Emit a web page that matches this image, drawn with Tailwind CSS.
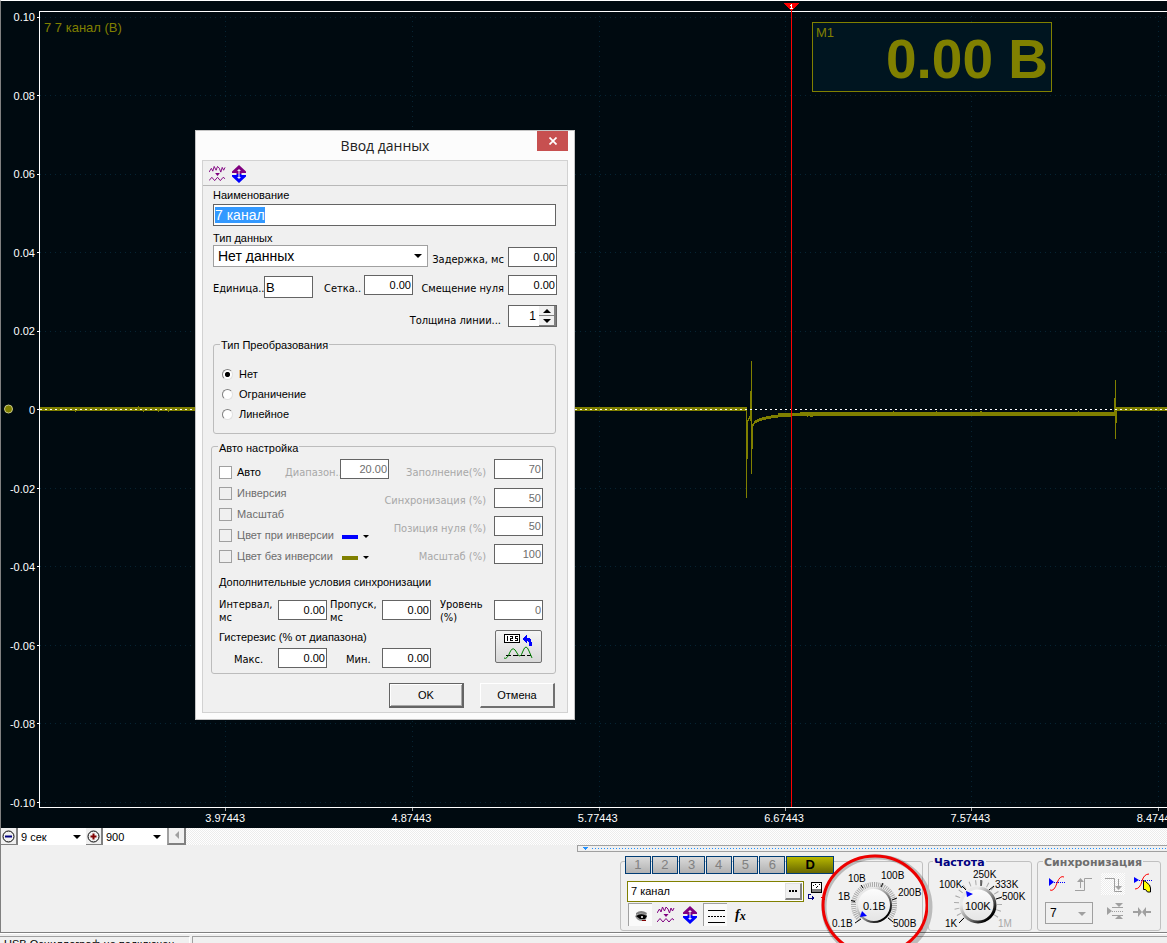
<!DOCTYPE html>
<html lang="ru">
<head>
<meta charset="utf-8">
<title>Осциллограф</title>
<script src="https://cdn.jsdelivr.net/npm/@tailwindcss/browser@4"></script>
</head>
<body class="bg-[#f0f0f0] text-black">
<svg class="absolute h-0 w-0" aria-hidden="true">
  <defs>
    <symbol id="waves" viewBox="0 0 18 18">
      <g fill="none" stroke="#800080">
        <path d="M0 7 L2.500 3 L4 6 L5.500 1 L7.500 5 L9 1 L11 3 L12.500 7 L14 2 L15.500 5 L17 2"/>
        <path d="M0 16 L3 12.500 L6 16 L9 12.500 L12 16 L15 12.500 L17 14"/>
      </g>
      <path d="M6.500 8 H11.500 L9 11 Z" fill="#800080"/>
    </symbol>
    <symbol id="updown" viewBox="0 0 16 18">
      <path d="M8 0 L15 6.500 V8 H10.500 V9 H5.500 V8 H1 V6.500 Z" fill="#800080"/>
      <path d="M8 18 L15 11.500 V10 H10.500 V9 H5.500 V10 H1 V11.500 Z" fill="#0000ff"/>
      <path d="M8 4 V14 M6.500 5.500 H9.500 M6.500 12.500 H9.500" stroke="#f0f0f0"/>
    </symbol>
    <symbol id="caret" viewBox="0 0 8 4"><path d="M0 0 H8 L4 4 Z" fill="currentColor"/></symbol>
    <pattern id="hatch" width="2" height="2" patternUnits="userSpaceOnUse"><rect width="2" height="2" fill="#fff"/><rect width="1" height="1" fill="#ececec"/><rect x="1" y="1" width="1" height="1" fill="#ececec"/></pattern>
    <linearGradient id="knobRim" x1="0" y1="0" x2="1" y2="1"><stop offset="0.25" stop-color="#e8e8e8"/><stop offset="0.6" stop-color="#777"/><stop offset="0.85" stop-color="#000"/></linearGradient>
    <linearGradient id="knobFace" x1="0" y1="0" x2="0" y2="1"><stop offset="0" stop-color="#fdfdfd"/><stop offset="1" stop-color="#e4e4e4"/></linearGradient>
  </defs>
</svg>

<div class="flex h-screen min-h-[720px] flex-col overflow-hidden font-['Liberation_Sans',sans-serif]">
  <main class="relative flex min-h-0 flex-1 border-t border-l border-t-white border-l-[#808080] bg-[#000a10]">
    <svg class="absolute inset-0 h-full w-full" viewBox="1 1 1166 827" preserveAspectRatio="none" shape-rendering="crispEdges" aria-hidden="true">
      <g stroke="#062433" stroke-dasharray="1 4" fill="none">
        <path d="M40 17.500H1167M40 95.500H1167M40 174.500H1167M40 252.500H1167M40 331.500H1167M40 488.500H1167M40 566.500H1167M40 645.500H1167M40 723.500H1167M40 802.500H1167"/>
        <path d="M225.500 16V807M412.500 16V807M599.500 16V807M785.500 16V807M971.500 16V807M1158.500 16V807"/>
      </g>
      <path d="M1167 11.500H39.500V807.500H1167" stroke="#fff" fill="none"/>
      <path d="M37 17.500h2M37 95.500h2M37 174.500h2M37 252.500h2M37 331.500h2M37 409.500h2M37 488.500h2M37 566.500h2M37 645.500h2M37 723.500h2M37 802.500h2" stroke="#fff"/>
      <path d="M225.500 808v3M412.500 808v3M599.500 808v3M785.500 808v3M971.500 808v3M1158.500 808v3" stroke="#aaa"/>
      <g fill="#808000">
        <path d="M40 407H747V411H40ZM746 407h1v91h-1zM747 421h1v38h-1zM747 420h1v-2h1v-2h2v3h-2v2h-2zM750 391h1v30h-1zM751 361h1v113h-1zM752 425h1v24h-1z"/>
        <path d="M752 424h1v3h-1zM753 423h1v3h-1zM754 421h1v3h-1zM755 420h2v3h-2zM757 419h2v3h-2zM759 418h3v3h-3zM762 417h4v3h-4zM766 416h5v3h-5zM771 415h7v3h-7zM778 413h14v4h-14zM792 413h14v3h-14zM800 412h316v4H800zM1115 380h1v59h-1zM1114 398h1v14h-1zM1116 407h1v16h-1zM1116 407H1167V411H1116Z"/>
        <path d="M75 411h1v1h-1zM138 406h1v1h-1zM143 411h1v1h-1zM158 411h1v1h-1zM168 411h1v1h-1zM807 416h1v1h-1zM810 416h3v1h-3zM893 411h1v1h-1zM936 411h1v1h-1zM980 411h2v1h-2zM1078 411h1v1h-1z"/>
      </g>
      <path d="M40 409.500H1167" stroke="#fff" stroke-dasharray="2 3"/>
      <path d="M791.500 8V807" stroke="#ff0000"/>
      <path d="M784 3H799L793 10H790Z" fill="#ff0000"/>
      <path d="M790 5.500h2M791.500 4v5M790 8.500h3" stroke="#fff"/>
      <circle cx="8.500" cy="409" r="4" fill="#808000" stroke="#c8c888" shape-rendering="auto"/>
    </svg>
    <div class="relative flex w-[34px] flex-col justify-between pt-2 pb-[17px] text-right text-[11px] leading-4 text-white">
      <span>0.10</span><span>0.08</span><span>0.06</span><span>0.04</span><span>0.02</span><span>0</span><span>-0.02</span><span>-0.04</span><span>-0.06</span><span>-0.08</span><span>-0.10</span>
    </div>
    <div class="relative flex min-w-0 flex-1 flex-col justify-between overflow-hidden">
      <p class="pt-[19px] pl-[9px] text-[13px] leading-4 text-[#808000]">7 7 канал (B)</p>
      <div class="flex pb-[2px] pl-[97px] text-center text-[11px] leading-4 text-white">
        <span class="w-[18%] shrink-0">3.97443</span><span class="w-[18%] shrink-0">4.87443</span><span class="w-[18%] shrink-0">5.77443</span><span class="w-[18%] shrink-0">6.67443</span><span class="w-[18%] shrink-0">7.57443</span><span class="w-[18%] shrink-0">8.47443</span>
      </div>
    </div>
    <div class="absolute top-[21px] left-[811px] flex h-[70px] w-[240px] justify-between border border-[#808000] bg-[#001520] px-[3px] text-[#808000]">
      <span class="pt-[2px] text-[13px] leading-4">M1</span>
      <span class="pt-[4px] text-[55px] leading-[64px] font-bold">0.00 B</span>
    </div>
  </main>

  <div class="flex h-[17px] shrink-0 border-l border-[#808080] bg-[#f0f0f0] text-[11px]">
    <button aria-label="Уменьшить" class="flex h-[17px] w-[17px] items-center justify-center border-r-2 border-b border-[#808080] bg-[#f0f0f0]">
      <svg width="13" height="13"><circle cx="6.500" cy="6.500" r="5.500" fill="none" stroke="#000"/><path d="M3 6.500h7" stroke="#000080" stroke-width="2"/></svg></button>
    <div class="relative w-[68px] bg-white">
      <select aria-label="Время" class="block h-[17px] w-full appearance-none pl-[3px] leading-4"><option>9 сек</option></select>
      <svg class="pointer-events-none absolute top-[7px] right-[5px] h-1 w-2"><use href="#caret"/></svg>
    </div>
    <button aria-label="Увеличить" class="flex h-[17px] w-[17px] items-center justify-center border-r-2 border-b border-[#808080] bg-[#f0f0f0]">
      <svg width="13" height="13"><circle cx="6.500" cy="6.500" r="5.500" fill="none" stroke="#000"/><path d="M3.500 6.500h6M6.500 3.500v6" stroke="#800000" stroke-width="2"/></svg></button>
    <div class="relative w-[64px] bg-white">
      <select aria-label="Отсчёты" class="block h-[17px] w-full appearance-none pl-[3px] leading-4"><option>900</option></select>
      <svg class="pointer-events-none absolute top-[7px] right-[6px] h-1 w-2"><use href="#caret"/></svg>
    </div>
    <button aria-label="Назад" class="flex w-[19px] items-center justify-center border-r-2 border-b-2 border-l-2 border-[#808080] border-l-[#a0a0a0] bg-[#f0f0f0]"><svg width="5" height="9"><path d="M5 0v8L1 4Z" fill="#a0a0a0"/></svg></button>
    <svg class="h-[17px] min-w-0 flex-1"><rect width="100%" height="100%" fill="url(#hatch)"/></svg>
  </div>

  <section class="flex h-[88px] shrink-0 border-b border-l border-[#808080]">
    <div class="w-[576px] shrink-0"></div>
    <div class="min-w-0 flex-1">
      <div class="flex h-[7px] items-center border border-r-0 border-[#a0a0a0] pl-[5px]">
        <svg class="h-[3px] w-full" shape-rendering="crispEdges"><path d="M0 0h5L2.500 3Z" fill="#2090ff"/><path d="M9 1.500H2000" stroke="#2090ff" stroke-dasharray="1 2"/></svg>
      </div>
      <div class="flex gap-[5px] pt-1 pl-[43px]">
        <fieldset class="relative flex h-[75px] w-[303px] shrink-0 items-start" aria-label="Каналы">
          <div class="absolute inset-x-0 top-[5px] bottom-0 rounded-[3px] border border-[#c0c0c0]"></div>
          <div class="relative w-[214px] pl-[5px]">
            <div class="flex gap-px text-[13px]">
              <button class="h-[18px] w-[26px] border border-[#003c74] bg-linear-to-b from-[#dadada] to-[#b2b2b2] leading-4 text-[#808080]">1</button>
              <button class="h-[18px] w-[26px] border border-[#003c74] bg-linear-to-b from-[#dadada] to-[#b2b2b2] leading-4 text-[#808080]">2</button>
              <button class="h-[18px] w-[26px] border border-[#003c74] bg-linear-to-b from-[#dadada] to-[#b2b2b2] leading-4 text-[#808080]">3</button>
              <button class="h-[18px] w-[26px] border border-[#003c74] bg-linear-to-b from-[#dadada] to-[#b2b2b2] leading-4 text-[#808080]">4</button>
              <button class="h-[18px] w-[26px] border border-[#003c74] bg-linear-to-b from-[#dadada] to-[#b2b2b2] leading-4 text-[#808080]">5</button>
              <button class="h-[18px] w-[26px] border border-[#003c74] bg-linear-to-b from-[#dadada] to-[#b2b2b2] leading-4 text-[#808080]">6</button>
              <button class="h-[18px] w-[48px] border border-[#003c74] bg-linear-to-b from-[#b8b800] to-[#686800] leading-4 font-bold text-black">D</button>
            </div>
            <div class="mt-[7px] flex gap-1 pl-[2px]">
              <div class="flex h-[21px] w-[177px] border border-[#808000] bg-white p-px">
                <input aria-label="Имя канала" value="7 канал" class="w-0 min-w-0 flex-1 pl-[2px] text-[11px] outline-none">
                <button aria-label="Выбрать канал" class="flex w-[17px] items-center justify-center border border-r-2 border-b-2 border-[#e0e0e0] border-r-[#808080] border-b-[#808080] bg-[#f0f0f0]"><svg width="9" height="2"><path d="M0 0h2v2H0zM3 0h2v2H3zM6 0h2v2H6z"/></svg></button>
              </div>
              <button aria-label="Измеритель" class="h-[20px] w-[18px]"><svg width="18" height="20" shape-rendering="crispEdges"><path d="M3.500 1.500h10v10h-10z" fill="#fff" stroke="#000"/><path d="M4 8h9v3H4z" fill="#808080"/><path d="M5 4h1v1H5zM7 3h1v1H7zM9 5h1v1H9zM11 3h1v1h-1zM8 6h1v1H8z"/><path d="M3 13.500H.5v3.500H5M4.500 15v4M5.500 16v2" fill="none" stroke="#000080"/><path d="M17 14v5L13 16.500Z" fill="#e00000"/></svg></button>
            </div>
            <div class="mt-px flex items-center pl-[3px]">
              <button aria-label="Показать" class="h-[23px] w-[24px] border-t border-l border-[#a0a0a0] bg-[#fafafa]"><svg width="23" height="22"><path d="M7 9Q12 5 18 9L17 11Q12 8 7 11Z" fill="#808080"/><path d="M6 12Q12 7 18 11Q18 17 13 17Q8 17 6 12Z" fill="#909090"/><path d="M7 12Q12 8.500 18 12L16 15H11Z" fill="#000"/><circle cx="13" cy="13" r="1" fill="#fff"/><path d="M13 16h4v1h-4z" fill="#800000"/></svg></button>
              <button aria-label="Сигналы" class="ml-[5px] h-[18px] w-[18px]"><svg class="h-[18px] w-[18px]"><use href="#waves"/></svg></button>
              <button aria-label="Вверх-вниз" class="ml-[7px] h-[18px] w-[16px]"><svg class="h-[18px] w-[16px]"><use href="#updown"/></svg></button>
              <button aria-label="Линии" class="ml-[5px] h-[23px] w-[24px] border-t border-l border-[#a0a0a0] bg-[#fafafa]"><svg width="23" height="22" shape-rendering="crispEdges"><path d="M4 6.500h17M4 18.500h17" stroke="#000"/><path d="M4 12.500h17" stroke="#000" stroke-dasharray="2 1"/></svg></button>
              <button aria-label="Функция" class="ml-[8px] flex h-[23px] w-[16px] items-center text-[14px] leading-4 font-bold italic font-['Liberation_Serif',serif]">f<span class="pt-[3px] text-[12px]">x</span></button>
            </div>
          </div>
          <svg class="relative h-[75px] w-[88px] overflow-visible font-['Liberation_Sans',sans-serif] text-[10px]" viewBox="834 856 88 75" role="img" aria-label="Диапазон 0.1B">
            <ellipse cx="877" cy="907" rx="53" ry="50" fill="none" stroke="#000" stroke-opacity="0.220" stroke-width="5"/>
            <path d="M859.500 919.500A20.500 20.500 0 1 1 888.500 919.500" fill="none" stroke="#a8a8a8" stroke-width="5" stroke-dasharray="1 1"/>
            <path d="M861 919l-6 4M855 901.500l-4-1M863 888l-2-3M881 887l2-4M892 900l5-2M888 918l5 4" stroke="#000"/>
            <circle cx="874" cy="905" r="17" fill="url(#knobFace)" stroke="url(#knobRim)" stroke-width="2"/>
            <path d="M862 911l5 5-7 1Z" fill="#0000ff"/>
            <text x="863" y="910" font-size="11">0.1B</text>
            <text x="832" y="927">0.1B</text><text x="838" y="900">1B</text><text x="848" y="882">10B</text><text x="881" y="879">100B</text><text x="898" y="896">200B</text><text x="893" y="927">500B</text>
            <ellipse cx="875" cy="905" rx="52" ry="49" fill="none" stroke="#ee0000" stroke-width="3"/>
          </svg>
        </fieldset>
        <fieldset class="relative h-[75px] w-[104px] shrink-0">
          <div class="absolute inset-x-0 top-[5px] bottom-0 rounded-[3px] border border-[#c0c0c0]"></div>
          <legend class="absolute top-0 left-[5px] bg-[#f0f0f0] px-px font-['DejaVu_Sans',sans-serif] text-[11px] leading-[14px] font-bold text-[#000080]">Частота</legend>
          <svg class="relative h-[75px] w-[104px] overflow-visible font-['Liberation_Sans',sans-serif] text-[10px]" viewBox="928 856 104 75" role="img" aria-label="Частота 100K">
            <path d="M963 919.500A21.500 21.500 0 1 1 993 919.500" fill="none" stroke="#a8a8a8" stroke-width="5" stroke-dasharray="1 5"/>
            <path d="M964 918l-5 5M966 890l-4-4M981 886v-6M989 890l5-4M996 899l6-2" stroke="#000"/>
            <circle cx="978" cy="905" r="17" fill="url(#knobFace)" stroke="url(#knobRim)" stroke-width="3"/>
            <path d="M966 891l7 3-6 3Z" fill="#0000ff"/>
            <text x="965" y="910" font-size="11">100K</text>
            <text x="945" y="927">1K</text><text x="939" y="888">100K</text><text x="973" y="878">250K</text><text x="995" y="888">333K</text><text x="1002" y="900">500K</text><text x="998" y="927" fill="#a8a8a8">1M</text>
          </svg>
        </fieldset>
        <fieldset class="relative h-[75px] w-[124px] shrink-0">
          <div class="absolute inset-x-0 top-[5px] bottom-0 rounded-[3px] border border-[#c0c0c0]"></div>
          <legend class="absolute top-0 left-[6px] bg-[#f0f0f0] px-px font-['DejaVu_Sans',sans-serif] text-[11px] leading-[14px] font-bold text-[#6d6d6d]">Синхронизация</legend>
          <div class="relative flex justify-between pt-[17px] pr-[8px] pl-[11px]">
            <button aria-label="Авто"><svg width="18" height="22"><path d="M1 5v8l5-4Z" fill="#0000ff"/><path d="M6 9.500h12" stroke="#0000ff" stroke-dasharray="1 1"/><path d="M2 17Q6 19 9 10Q12 2 16 4" fill="none" stroke="#f00" stroke-width="1"/></svg></button>
            <button aria-label="Фронт"><svg width="20" height="22" fill="none" stroke="#a0a0a0"><path d="M1 17.500h9.500v-12H18M6.500 15V7" stroke-width="1"/><path d="M3 9h7L6.500 5Z" fill="#a0a0a0" stroke="none"/></svg></button>
            <button aria-label="Спад" class="bg-white"><svg width="24" height="22" fill="none" stroke="#a0a0a0"><rect width="24" height="22" fill="url(#hatch)" stroke="none"/><path d="M4 5.500h9.500v13H21M17.500 6v8"/><path d="M14 13h7l-3.500 4Z" fill="#a0a0a0" stroke="none"/></svg></button>
            <button aria-label="Вручную"><svg width="20" height="22"><path d="M1 4v6l5-3Z" fill="#0000ff"/><path d="M6 7.500h13" stroke="#0000ff" stroke-dasharray="1 1"/><path d="M2 16Q7 16 9 8Q11 1 16 1" fill="none" stroke="#f00"/><path d="M10.500 7.500v9l2 0 2 2.500h3v-4l-1-3-4-3.500Z" fill="#ffff00" stroke="#000"/></svg></button>
          </div>
          <div class="relative flex items-start pt-[7px] pl-[8px]">
            <div class="relative h-[22px] w-[48px] border border-[#a0a0a0]">
              <select aria-label="Канал синхронизации" class="block h-full w-full appearance-none pl-1 text-[12px]"><option>7</option></select>
              <svg class="pointer-events-none absolute top-[9px] right-[6px] h-1 w-2 text-[#a0a0a0]"><use href="#caret"/></svg>
            </div>
            <svg class="ml-[13px]" width="18" height="18"><path d="M1 5v8l5-4ZM9 1h8l-4 4ZM9 17h8l-4-4Z" fill="#a0a0a0"/><path d="M6 5.500h11M6 13.500h11" stroke="#a0a0a0"/><path d="M6 9.500h11" stroke="#a0a0a0" stroke-dasharray="1 1"/></svg>
            <svg class="ml-[9px]" width="18" height="18"><path d="M0 9h5V5l4 5-4 5v-4H0ZM18 9h-5V5L9 10l4 5v-4h5Z" fill="#a0a0a0"/></svg>
          </div>
        </fieldset>
      </div>
    </div>
  </section>

  <footer class="flex h-[10px] shrink-0 gap-[2px] overflow-hidden border-t border-white pt-[2px]">
    <div class="w-[190px] shrink-0 overflow-hidden border-t border-r border-[#a0a0a0] border-r-white pt-px pl-1 text-[11px] leading-3 whitespace-nowrap">USB Осциллограф не подключен</div>
    <div class="flex-1 border-t border-l border-[#a0a0a0]"></div>
  </footer>
</div>

<form role="dialog" aria-labelledby="title" class="absolute top-[130px] left-[195px] w-[380px] border border-[#c4c4c4] bg-[#fcfcfc] px-[6px] pb-[6px] font-['Liberation_Sans',sans-serif] text-[11px] leading-[14px]">
  <header class="relative flex h-[29px] items-center justify-center">
    <h1 id="title" class="font-['Open_Sans',sans-serif] text-[14px] text-[#222]">Ввод данных</h1>
    <button type="button" aria-label="Закрыть" class="absolute top-0 right-0 flex h-5 w-[31px] items-center justify-center bg-[#c75050]"><svg width="8" height="8"><path d="M.5 .5l7 7M7.500 .5l-7 7" stroke="#fff" stroke-width="1.700"/></svg></button>
  </header>
  <div class="border border-[#d2d2d2] bg-[#f0f0f0] pb-[4px]">
    <div class="flex h-[25px] items-center gap-[5px] border-b border-[#b8b8b8] pt-px pl-[6px]">
      <button type="button" aria-label="Сигналы" class="h-[18px] w-[17px]"><svg class="h-[18px] w-[17px]"><use href="#waves"/></svg></button>
      <button type="button" aria-label="Вверх-вниз" class="h-[18px] w-[16px]"><svg class="h-[18px] w-[16px]"><use href="#updown"/></svg></button>
    </div>
    <div class="pt-[2px] pr-[11px] pl-[10px]">
      <label for="name" class="block">Наименование</label>
      <input id="name" value="7 канал" autofocus class="mt-[2px] block h-[22px] w-full border border-[#646464] bg-white px-px text-[14px] leading-4 outline-none selection:bg-[#3399ff] selection:text-white">
    </div>
    <div class="pt-[5px] pr-[10px] pl-[10px]">
      <label for="type" class="block">Тип данных</label>
      <div class="flex items-start justify-between">
        <div class="relative w-[215px]">
          <select id="type" class="block h-[22px] w-full appearance-none border border-[#a0a0a0] bg-white pl-1 text-[14px]"><option>Нет данных</option></select>
          <svg class="pointer-events-none absolute top-[9px] right-[6px] h-1 w-2"><use href="#caret"/></svg>
        </div>
        <div class="flex items-start gap-1 pt-[2px]"><label for="delay" class="pt-[6px] font-['DejaVu_Sans_Condensed','Noto_Sans',sans-serif]">Задержка, мс</label><input id="delay" value="0.00" class="h-5 w-[49px] border border-[#646464] bg-white pr-px text-right text-[11px]"></div>
      </div>
      <div class="flex items-start pt-2">
        <div class="flex pt-px"><label for="unit" class="w-[51px] pt-[6px] font-['DejaVu_Sans_Condensed','Noto_Sans',sans-serif]">Единица..</label><input id="unit" value="В" class="h-[22px] w-[49px] border border-[#646464] bg-white pl-px text-[13px]"></div>
        <div class="ml-[11px] flex"><label for="grid" class="w-[40px] pt-[7px] font-['DejaVu_Sans_Condensed','Noto_Sans',sans-serif]">Сетка..</label><input id="grid" value="0.00" class="h-5 w-[49px] border border-[#646464] bg-white pr-px text-right text-[11px]"></div>
        <div class="ml-auto flex gap-1"><label for="zero" class="pt-[7px] font-['DejaVu_Sans_Condensed','Noto_Sans',sans-serif]">Смещение нуля</label><input id="zero" value="0.00" class="h-5 w-[49px] border border-[#646464] bg-white pr-px text-right text-[11px]"></div>
      </div>
      <div class="flex justify-end gap-[7px] pt-[7px]">
        <label for="width" class="pt-[9px] font-['DejaVu_Sans_Condensed','Noto_Sans',sans-serif]">Толщина линии...</label>
        <div class="flex h-[22px] w-[49px] border border-[#646464] bg-white">
          <input id="width" value="1" class="w-0 min-w-0 flex-1 pr-[3px] text-right text-[12px]">
          <div class="flex w-[17px] flex-col">
            <button type="button" aria-label="Больше" class="flex flex-1 items-center justify-center border-r-2 border-b border-[#808080] bg-[#f0f0f0]"><svg width="8" height="4"><path d="M0 4h8L4 0Z"/></svg></button>
            <button type="button" aria-label="Меньше" class="flex flex-1 items-center justify-center border-r-2 border-b border-[#808080] bg-[#f0f0f0]"><svg width="8" height="4"><path d="M0 0h8L4 4Z"/></svg></button>
          </div>
        </div>
      </div>
    </div>

    <fieldset class="relative mt-[10px] mr-[11px] ml-[10px]">
      <div class="absolute inset-x-0 top-[6px] bottom-0 rounded-[3px] border border-[#bcbcbc]"></div>
      <legend class="relative float-left ml-[7px] bg-[#f0f0f0] px-px">Тип Преобразования</legend>
      <div class="relative clear-both flex flex-col gap-[6px] px-[9px] pt-[15px] pb-[13px]">
        <label class="flex items-center gap-[6px]"><input type="radio" name="conv" checked class="h-[11px] w-[11px] appearance-none rounded-full border border-[#808080] border-r-[#e0e0e0] border-b-[#e0e0e0] bg-white bg-radial from-black from-[2px] to-white to-[3px]">Нет</label>
        <label class="flex items-center gap-[6px]"><input type="radio" name="conv" class="h-[11px] w-[11px] appearance-none rounded-full border border-[#808080] border-r-[#e0e0e0] border-b-[#e0e0e0] bg-white">Ограничение</label>
        <label class="flex items-center gap-[6px]"><input type="radio" name="conv" class="h-[11px] w-[11px] appearance-none rounded-full border border-[#808080] border-r-[#e0e0e0] border-b-[#e0e0e0] bg-white">Линейное</label>
      </div>
    </fieldset>

    <fieldset class="relative mt-[7px] mr-[11px] ml-[8px]">
      <div class="absolute inset-x-0 top-[5px] bottom-0 rounded-[3px] border border-[#bcbcbc]"></div>
      <legend class="relative float-left ml-[7px] bg-[#f0f0f0] px-px">Авто настройка</legend>
      <div class="relative clear-both px-[8px] pt-[4px] pb-[6px]">
        <div class="flex justify-between pr-[5px]">
          <div class="flex flex-col gap-[7px] pt-[6px] text-[#6d6d6d]">
            <label class="flex items-center gap-[5px] text-black"><input type="checkbox" class="h-[13px] w-[13px] appearance-none border border-[#a0a0a0] bg-white">Авто</label>
            <label class="flex items-center gap-[5px]"><input type="checkbox" disabled class="h-[13px] w-[13px] appearance-none border border-[#a0a0a0]">Инверсия</label>
            <label class="flex items-center gap-[5px]"><input type="checkbox" disabled class="h-[13px] w-[13px] appearance-none border border-[#a0a0a0]">Масштаб</label>
            <div class="flex items-center"><label class="flex w-[123px] items-center gap-[5px] whitespace-nowrap"><input type="checkbox" disabled class="h-[13px] w-[13px] appearance-none border border-[#a0a0a0]">Цвет при инверсии</label><button type="button" aria-label="Цвет при инверсии" class="flex items-center gap-[5px] pt-[3px]"><span class="h-1 w-4 bg-[#0000ff]"></span><svg class="h-[3px] w-[6px] text-black"><use href="#caret"/></svg></button></div>
            <div class="flex items-center"><label class="flex w-[123px] items-center gap-[5px] whitespace-nowrap"><input type="checkbox" disabled class="h-[13px] w-[13px] appearance-none border border-[#a0a0a0]">Цвет без инверсии</label><button type="button" aria-label="Цвет без инверсии" class="flex items-center gap-[5px] pt-[3px]"><span class="h-1 w-4 bg-[#808000]"></span><svg class="h-[3px] w-[6px] text-black"><use href="#caret"/></svg></button></div>
          </div>
          <div class="relative flex flex-col items-end gap-2 font-['DejaVu_Sans_Condensed','Noto_Sans',sans-serif] text-[#a8a8a8]">
            <div class="absolute top-0 right-[154px] flex"><label for="range" class="w-[55px] pt-[7px]">Диапазон..</label><input id="range" value="20.00" disabled class="h-5 w-[49px] border border-[#646464] bg-white pr-px text-right font-['Liberation_Sans',sans-serif] text-[11px] text-[#6d6d6d]"></div>
            <div class="flex gap-2"><label for="fill" class="pt-[7px]">Заполнение(%)</label><input id="fill" value="70" disabled class="h-5 w-[49px] border border-[#646464] bg-white pr-px text-right font-['Liberation_Sans',sans-serif] text-[11px] text-[#6d6d6d]"></div>
            <div class="flex gap-2"><label for="sync" class="pt-[6px]">Синхронизация (%)</label><input id="sync" value="50" disabled class="h-5 w-[49px] border border-[#646464] bg-white pr-px text-right font-['Liberation_Sans',sans-serif] text-[11px] text-[#6d6d6d]"></div>
            <div class="flex gap-2"><label for="pos" class="pt-[6px]">Позиция нуля (%)</label><input id="pos" value="50" disabled class="h-5 w-[49px] border border-[#646464] bg-white pr-px text-right font-['Liberation_Sans',sans-serif] text-[11px] text-[#6d6d6d]"></div>
            <div class="flex gap-2"><label for="scale" class="pt-[6px]">Масштаб (%)</label><input id="scale" value="100" disabled class="h-5 w-[49px] border border-[#646464] bg-white pr-px text-right font-['Liberation_Sans',sans-serif] text-[11px] text-[#6d6d6d]"></div>
          </div>
        </div>
        <p class="pt-[11px]">Дополнительные условия синхронизации</p>
        <div class="flex items-start pt-[9px] font-['DejaVu_Sans_Condensed','Noto_Sans',sans-serif] leading-[13px]">
          <label for="interval" class="w-[59px]">Интервал,<br>мс</label><input id="interval" value="0.00" class="mt-[2px] h-5 w-[49px] border border-[#646464] bg-white pr-px text-right font-['Liberation_Sans',sans-serif] text-[11px]">
          <label for="skip" class="ml-[3px] w-[52px]">Пропуск,<br>мс</label><input id="skip" value="0.00" class="mt-[2px] h-5 w-[49px] border border-[#646464] bg-white pr-px text-right font-['Liberation_Sans',sans-serif] text-[11px]">
          <label for="level" class="ml-[9px] w-[54px]">Уровень<br>(%)</label><input id="level" value="0" disabled class="mt-[2px] h-5 w-[49px] border border-[#646464] bg-white pr-px text-right font-['Liberation_Sans',sans-serif] text-[11px] text-[#6d6d6d]">
        </div>
        <div class="flex items-start justify-between pt-[6px] pr-[6px]">
          <div>
            <p>Гистерезис (% от диапазона)</p>
            <div class="flex items-start pt-[4px] font-['DejaVu_Sans_Condensed','Noto_Sans',sans-serif]">
              <label for="max" class="w-[59px] pt-[5px] pl-[15px]">Макс.</label><input id="max" value="0.00" class="h-5 w-[49px] border border-[#646464] bg-white pr-px text-right font-['Liberation_Sans',sans-serif] text-[11px]">
              <label for="min" class="w-[55px] pt-[5px] pl-[19px]">Мин.</label><input id="min" value="0.00" class="h-5 w-[49px] border border-[#646464] bg-white pr-px text-right font-['Liberation_Sans',sans-serif] text-[11px]">
            </div>
          </div>
          <button type="button" aria-label="Рассчитать" class="flex h-[33px] w-[47px] items-center justify-center rounded-[2px] border border-[#707070] bg-linear-to-b from-[#f4f4f4] to-[#d8d8d8]">
            <svg width="31" height="28" shape-rendering="crispEdges"><path d="M1.500 1.500h15v8h-15z" fill="#fff" stroke="#000"/><path d="M4.500 3v5M7 3.500h2.500v2H7.500v2H10M14.500 3.500H12v2h2v2h-2.500" fill="none" stroke="#000"/><path d="M19 6l5-4v3h2q3 1 3 8h-3q0-5-2-5v3Z" fill="#0000ff"/><path d="M3 22.500h25" stroke="#000" stroke-dasharray="5 2"/><path d="M1 25Q4 27 7 19Q10 12 14 20Q17 27 20 18Q23 10 26 18L29 25" fill="none" stroke="#008000" shape-rendering="auto"/></svg>
          </button>
        </div>
      </div>
    </fieldset>
    <div class="flex justify-end gap-4 pt-[9px] pr-[12px]">
      <button class="h-[25px] w-[75px] border border-r-2 border-b-2 border-[#646464] bg-[#f0f0f0] shadow-[inset_1px_1px_#fff,inset_-1px_-1px_#a8a8a8]">OK</button>
      <button type="button" class="h-[25px] w-[75px] border border-r-2 border-b-2 border-white border-r-[#707070] border-b-[#707070] bg-[#f0f0f0]">Отмена</button>
    </div>
  </div>
</form>
<script>document.getElementById('name').select();</script>
</body>
</html>
